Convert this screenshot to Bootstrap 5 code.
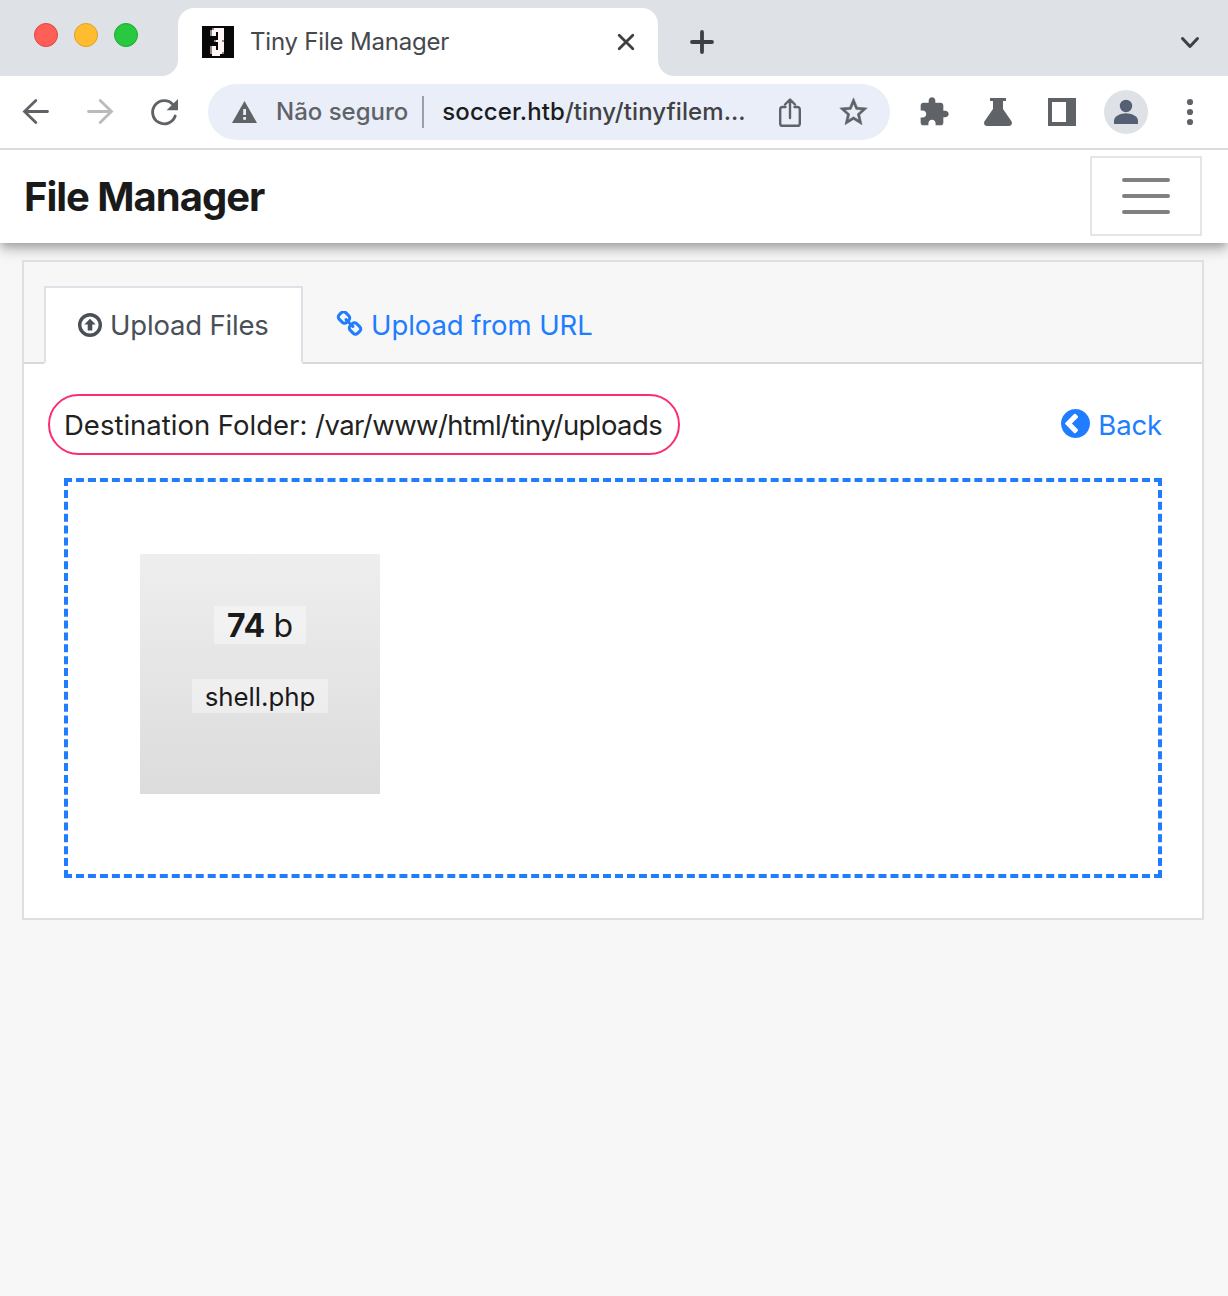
<!DOCTYPE html>
<html lang="pt-BR">
<head>
<meta charset="utf-8">
<meta name="viewport" content="width=device-width, initial-scale=1">
<title>Tiny File Manager</title>
<link href="https://cdn.jsdelivr.net/npm/bootstrap@5.3.0/dist/css/bootstrap.min.css" rel="stylesheet">
<style>
body{font-family:Inter,Roboto,sans-serif;background:#f7f7f7;color:#222;width:1228px;height:1296px;overflow:hidden;font-size:27.5px;line-height:40px}
svg{display:block;flex:none}
.browser{position:relative;z-index:2}
.tabstrip{height:76px;background:#dee1e6;padding-left:34px}
.dots{gap:16px;padding-top:23px;width:144px}
.dot{width:24px;height:24px;border-radius:50%;border:1px solid #e0443e;background:#ff5f57}
.dot.amber{background:#febc2e;border-color:#dfa023}
.dot.green{background:#28c840;border-color:#1aab29}
.browser-tab{position:relative;width:480px;height:68px;margin-top:8px;background:#fff;border-radius:16px 16px 0 0;padding:0 22px 0 24px;color:#45484c;font-size:24px}
.browser-tab::before,.browser-tab::after{content:"";position:absolute;bottom:0;width:16px;height:16px}
.browser-tab::before{left:-16px;background:radial-gradient(circle at 0 0,#dee1e6 15.5px,#fff 16.3px)}
.browser-tab::after{right:-16px;background:radial-gradient(circle at 100% 0,#dee1e6 15.5px,#fff 16.3px)}
.tab-title{margin-left:16px;letter-spacing:-.2px}
.new-tab{margin:29px 0 0 31px}
.tab-search{margin:32px 28px 0 0}
.toolbar{height:74px;border-bottom:2px solid #dcdcdc;background:#fff;padding:0 18px 0 20px}
.nav-icons{gap:32px}
.omnibox{width:682px;height:56px;border-radius:28px;background:#eaeef8;margin-left:28px;padding:0 20px 0 22px;font-size:24px;color:#404244}
.notsafe{color:#5f6368;font-weight:500;margin-left:17px}
.sep{width:2px;height:32px;background:#9b9fa6;margin:0 18px 0 14px}
.url{font-weight:500;white-space:nowrap;letter-spacing:.08px}
.url b{font-weight:500;color:#1b1c1e}
.star{margin-left:31px}
.extensions{gap:32px;margin-left:28px}
.avatar{width:44px;height:44px;background:#dee1e6;margin-left:26px}
.appbar{position:relative;height:93px;background:#fff;padding:0 26px 0 24px;box-shadow:0 8px 10px 0 rgba(0,0,0,.14),0 2px 20px 0 rgba(0,0,0,.12),0 4px 8px -2px rgba(0,0,0,.2)}
.brand{font-size:40px;font-weight:700;color:#1a1a1a;letter-spacing:-1.02px;margin:0}
.menu-btn{width:112px;height:80px;border:2px solid #e5e5e5;border-radius:0;margin-bottom:1px}
.upload-card{margin:17px 24px 0 22px;height:660px;border:2px solid #dfdfdf;border-radius:0}
.upload-head{height:102px;background:#f7f7f7;border-bottom:2px solid #d9d9d9;padding:24px 20px 0}
.upload-head .nav-link{height:78px;border-radius:0;border-width:2px;padding:0 32px;color:#217dff;margin:0;white-space:nowrap}
.upload-head .nav-link.active{width:259px;color:#495057;border-color:#dee2e6 #dee2e6 #fff;background:#fff;letter-spacing:-.18px}
.upload-head .nav{border:0}
.upload-head .from-icon{margin:-1px 0 0 -1px}
.from-url{letter-spacing:-.08px}
.upload-body{padding:30px 40px 0 24px}
.pill{width:632px;height:61px;border:2px solid #fa2e70;border-radius:31px;padding-left:14px;white-space:pre}
.path{letter-spacing:-.57px}
.blue{color:#217dff;text-decoration:none}
.back{margin-left:8px;letter-spacing:-.15px}
.back-icon{margin-top:-3px}
.drop{height:400px;margin:23px 0 0 16px;padding:72px;border:4px dashed #217dff}
.thumb{width:240px;height:240px;background:linear-gradient(#eee,#dcdcdc);color:#1a1a1a}
.thumb span{background:rgba(255,255,255,.4)}
.fsize{width:92px;height:38px;font-size:32px;line-height:39px;margin-top:52px;letter-spacing:-.3px}
.fname{width:136px;height:34px;font-size:25.8px;line-height:35px;margin-top:35px}
</style>
</head>
<body>
<header class="browser">
<div class="tabstrip d-flex">
  <div class="dots d-flex"><i class="dot"></i><i class="dot amber"></i><i class="dot green"></i></div>
  <div class="browser-tab d-flex align-items-center">
    <svg width="32" height="32" viewBox="0 0 16 16" shape-rendering="crispEdges"><path fill="#080808" d="M0 0h16v16H0z"/><path fill="#8d8888" d="M4 2h1v3H4zM5 1h1v1H5zM6 7h1v1H6zM4 10h1v4H4zM10 7h1v1h-1zM10 13h1v1h-1z"/><path fill="#fff5f5" d="M6 1h5v6h-1v1h1v5h-1v1H9v1H5v-5h2v2h1V8H7V7h1V3H7v2H5V2h1z"/><path fill="#080808" d="M7 3h1v4H7zM7 8h1v4H7z"/></svg>
    <span class="tab-title">Tiny File Manager</span>
    <svg class="ms-auto" width="20" height="20" viewBox="0 0 20 20" stroke="#3c4043" stroke-width="2.8" stroke-linecap="round"><path d="M3.200 3.200l13.600 13.600M16.800 3.200L3.200 16.800"/></svg>
  </div>
  <svg class="new-tab" width="26" height="26" viewBox="0 0 26 26" stroke="#3c4043" stroke-width="3.8" stroke-linecap="round"><path d="M13 3v20M3 13h20"/></svg>
  <svg class="tab-search ms-auto" width="20" height="20" viewBox="0 0 20 20" fill="none" stroke="#3c4043" stroke-width="3" stroke-linecap="round" stroke-linejoin="round"><path d="M2.500 6.500L10 14.500l7.500-8"/></svg>
</div>
<div class="toolbar d-flex align-items-center">
  <div class="nav-icons d-flex">
  <svg width="32" height="32" viewBox="0 0 32 32" fill="none" stroke="#5f6368" stroke-width="2.8" stroke-linecap="round"><path d="M27.500 15.500H5M15.800 4.500L4.500 15.500l11.300 11"/></svg>
  <svg width="32" height="32" viewBox="0 0 32 32" fill="none" stroke="#b9bbbd" stroke-width="2.8" stroke-linecap="round"><path d="M4.500 15.500H27M16.200 4.500L27.500 15.500 16.200 26.500"/></svg>
  <svg width="32" height="32" viewBox="0 0 32 32"><path d="M27.200 20A11.600 11.600 0 1 1 25 8.600" fill="none" stroke="#5f6368" stroke-width="2.9" stroke-linecap="round"/><path fill="#5f6368" d="M30 3v11.300H18.600z"/></svg>
  </div>
  <div class="omnibox d-flex align-items-center">
    <svg width="29" height="28" viewBox="0 0 29 28"><path fill="#5f6368" d="M14.500 3L27 25H2z"/><path fill="#eaeef8" d="M13.200 11h2.800v6h-2.800zM13.200 19h2.800v2.800h-2.800z"/></svg>
    <span class="notsafe">Não seguro</span><i class="sep"></i><span class="url"><b>soccer.htb</b>/tiny/tinyfilem...</span>
    <svg class="ms-auto" width="32" height="32" viewBox="0 0 32 32" fill="none" stroke="#5f6368" stroke-width="2.4" stroke-linecap="round" stroke-linejoin="round"><path d="M11.500 11H8.600a2.400 2.400 0 0 0-2.400 2.400v14a2.400 2.400 0 0 0 2.400 2.400h14.800a2.400 2.400 0 0 0 2.400-2.400v-14a2.400 2.400 0 0 0-2.400-2.400h-2.900M16 22V4M11 8.500l5-5 5 5"/></svg>
    <svg class="star" width="33" height="34" viewBox="0 0 24 24" fill="#5f6368" preserveAspectRatio="none"><path stroke="#5f6368" stroke-width=".4" d="M22 9.240l-7.190-.62L12 2 9.190 8.630 2 9.240l5.460 4.730L5.820 21 12 17.270 18.180 21l-1.630-7.030L22 9.240zM12 15.400l-3.760 2.270 1-4.280-3.320-2.880 4.380-.38L12 6.100l1.710 4.040 4.380.38-3.320 2.880 1 4.280L12 15.400z"/></svg>
  </div>
  <div class="extensions d-flex">
  <svg width="32" height="32" viewBox="0 0 24 24" fill="#5f6368"><path d="M20.500 11H19V7c0-1.100-.9-2-2-2h-4V3.500C13 2.120 11.880 1 10.500 1S8 2.120 8 3.500V5H4c-1.100 0-1.990.9-1.990 2v3.800H3.500c1.490 0 2.700 1.210 2.700 2.700s-1.210 2.700-2.700 2.700H2V20c0 1.100.9 2 2 2h3.800v-1.500c0-1.490 1.210-2.700 2.700-2.700s2.700 1.210 2.700 2.700V22H17c1.100 0 2-.9 2-2v-4h1.500c1.380 0 2.500-1.120 2.500-2.500S21.880 11 20.500 11z"/></svg>
  <svg width="32" height="32" viewBox="0 0 32 32" fill="#5f6368"><path d="M8 2h16v3h-3v8l8.300 12c1.400 2 .4 5-2.300 5H5c-2.700 0-3.700-3-2.300-5L11 13V5H8z"/></svg>
  <svg width="32" height="32" viewBox="0 0 32 32"><path fill="#5f6368" fill-rule="evenodd" d="M2 2h28v28H2zM6 6v20h14V6z"/></svg>
  </div>
  <div class="avatar rounded-circle"><svg width="44" height="44" viewBox="0 0 44 44" fill="#566074"><circle cx="22" cy="16" r="6.200"/><path d="M10 34v-3.500c0-4.500 7-7.300 12-7.300s12 2.800 12 7.300V34z"/></svg></div>
  <svg class="ms-auto" width="32" height="32" viewBox="4 0 32 32" fill="#5f6368"><circle cx="16" cy="6" r="3.100"/><circle cx="16" cy="16" r="3.100"/><circle cx="16" cy="26" r="3.100"/></svg>
</div>
</header>
<nav class="appbar d-flex align-items-center justify-content-between">
  <h1 class="brand">File Manager</h1>
  <button class="menu-btn btn p-0 d-flex align-items-center justify-content-center" aria-label="Menu"><svg width="48" height="36" viewBox="0 0 48 36" stroke="#808080" stroke-width="4" stroke-linecap="round"><path d="M2 2h44M2 18h44M2 34h44"/></svg></button>
</nav>
<main class="card upload-card">
  <div class="upload-head">
    <div class="nav nav-tabs">
      <a class="nav-link active d-flex align-items-center" href="#"><svg width="24" height="24" viewBox="0 0 24 24"><circle cx="12" cy="12" r="10.300" fill="none" stroke="#495057" stroke-width="3.400"/><path fill="#495057" d="M12 5.800l5.600 5.700h-3.300v6H9.700v-6H6.400z"/></svg><span class="ms-2">Upload Files</span></a>
      <a class="nav-link d-flex align-items-center" href="#"><svg class="from-icon" width="27" height="27" viewBox="32 64 1728 1728" fill="#217dff"><path d="M1520 1216q0-40-28-68l-208-208q-28-28-68-28-42 0-72 32 3 3 19 18.500t21.500 21.500 15 19 13 25.500 3.500 27.500q0 40-28 68t-68 28q-15 0-27.500-3.500t-25.500-13-19-15-21.500-21.500-18.500-19q-33 31-33 73 0 40 28 68l206 207q27 27 68 27 40 0 68-26l147-146q28-28 28-67zm-703-705q0-40-28-68l-206-207q-28-28-68-28-39 0-68 27l-147 146q-28 28-28 67 0 40 28 68l208 208q27 27 68 27 42 0 72-31-3-3-19-18.500t-21.500-21.500-15-19-13-25.500-3.500-27.500q0-40 28-68t68-28q15 0 27.500 3.500t25.500 13 19 15 21.500 21.500 18.500 19q33-31 33-73zm895 705q0 120-85 203l-147 146q-83 83-203 83-121 0-204-85l-206-207q-83-83-83-203 0-123 88-209l-88-88q-86 88-208 88-120 0-204-84l-208-208q-84-84-84-204t85-203l147-146q83-83 203-83 121 0 204 85l206 207q83 83 83 203 0 123-88 209l88 88q86-88 208-88 120 0 204 84l208 208q84 84 84 204z"/></svg><span class="from-url ms-2">Upload from URL</span></a>
    </div>
  </div>
  <div class="upload-body">
    <div class="d-flex justify-content-between align-items-center">
      <div class="pill d-flex align-items-center"><span>Destination Folder: </span><span class="path">/var/www/html/tiny/uploads</span></div>
      <a class="blue d-flex align-items-center" href="#"><svg class="back-icon" width="29" height="29" viewBox="128 128 1536 1536" fill="#217dff"><path d="M909 1395l102-102q19-19 19-45t-19-45l-307-307 307-307q19-19 19-45t-19-45l-102-102q-19-19-45-19t-45 19l-454 454q-19 19-19 45t19 45l454 454q19 19 45 19t45-19zM1664 896q0 209-103 385.500t-279.500 279.500-385.500 103-385.500-103-279.500-279.500-103-385.500 103-385.500 279.500-279.500 385.500-103 385.500 103 279.500 279.500 103 385.500z"/></svg><span class="back">Back</span></a>
    </div>
    <div class="drop">
      <div class="thumb d-flex flex-column align-items-center"><span class="fsize text-center"><strong>74</strong> b</span><span class="fname text-center">shell.php</span></div>
    </div>
  </div>
</main>
<script src="https://cdn.jsdelivr.net/npm/bootstrap@5.3.0/dist/js/bootstrap.bundle.min.js"></script>
</body>
</html>
